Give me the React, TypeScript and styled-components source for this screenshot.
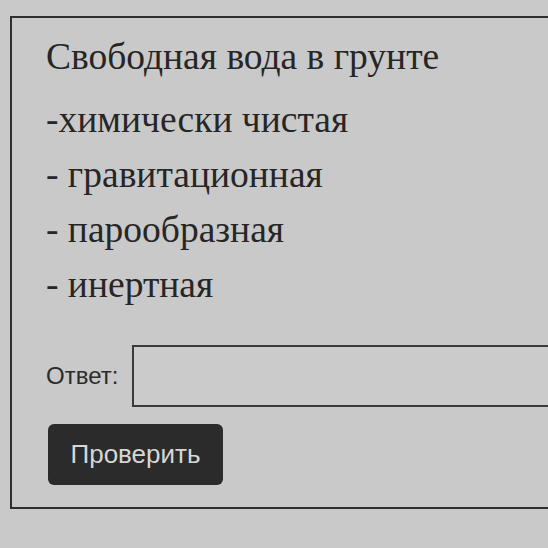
import React from "react";
import styled, { createGlobalStyle } from "styled-components";

const Global = createGlobalStyle`
  html, body { margin: 0; padding: 0; background: #c9c9c9; overflow: hidden; }
  body { width: 548px; height: 548px; }
`;

const Frame = styled.div`
  margin: 16px 0 0 10px;
  width: 560px;
  box-sizing: border-box;
  border: 2px solid #2e2e2e;
  border-right: none;
  padding: 11px 0 22px 34px;
  background: #c9c9c9;
`;

const Question = styled.div`
  font-family: "Liberation Serif", "Times New Roman", serif;
  font-size: 37.5px;
  line-height: 55px;
  color: #262626;
`;

const Title = styled.p`
  margin: 0 0 8px 0;
`;

const Option = styled.p`
  margin: 0;
`;

const AnswerRow = styled.div`
  display: flex;
  align-items: center;
  gap: 14px;
  margin-top: 33px;
`;

const Label = styled.label`
  font-family: "Liberation Sans", Arial, sans-serif;
  font-size: 24px;
  color: #2c2c2c;
`;

const Input = styled.div`
  flex: 1;
  height: 62px;
  box-sizing: border-box;
  border: 2px solid #3a3a3a;
  border-right: none;
  background: #cbcbcb;
`;

const Button = styled.button`
  margin: 17px 0 0 2px;
  width: 175px;
  height: 61px;
  border: none;
  border-radius: 6px;
  background: #2b2b2b;
  color: #d6d6d6;
  font-family: "Liberation Sans", Arial, sans-serif;
  font-size: 26px;
  cursor: pointer;
`;

export default function App() {
  return (
    <>
      <Global />
      <Frame>
        <Question>
          <Title>Свободная вода в грунте</Title>
          <Option>-химически чистая</Option>
          <Option>- гравитационная</Option>
          <Option>- парообразная</Option>
          <Option>- инертная</Option>
        </Question>
        <AnswerRow>
          <Label>Ответ:</Label>
          <Input />
        </AnswerRow>
        <Button>Проверить</Button>
      </Frame>
    </>
  );
}
